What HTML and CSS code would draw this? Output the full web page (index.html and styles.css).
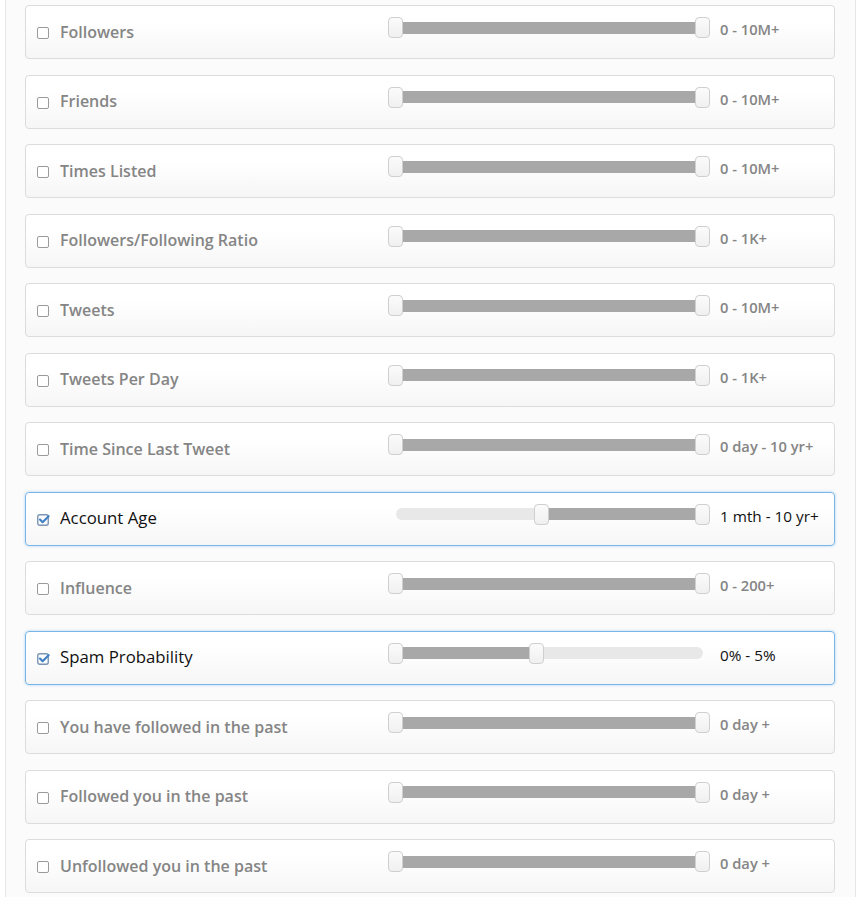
FILE: index.html
```html
<!DOCTYPE html>
<html>
<head>
<meta charset="utf-8">
<link rel="stylesheet" href="styles.css">
</head>
<body>
<div class="panel">
  <div class="card">
    <span class="box"></span><span class="label">Followers</span>
    <div class="slider"><div class="track"><div class="sel" style="left:0%;right:0%"></div><span class="h" style="left:0%"></span><span class="h" style="left:100%"></span></div></div>
    <span class="val">0 - 10M+</span>
  </div>
  <div class="card">
    <span class="box"></span><span class="label">Friends</span>
    <div class="slider"><div class="track"><div class="sel" style="left:0%;right:0%"></div><span class="h" style="left:0%"></span><span class="h" style="left:100%"></span></div></div>
    <span class="val">0 - 10M+</span>
  </div>
  <div class="card">
    <span class="box"></span><span class="label">Times Listed</span>
    <div class="slider"><div class="track"><div class="sel" style="left:0%;right:0%"></div><span class="h" style="left:0%"></span><span class="h" style="left:100%"></span></div></div>
    <span class="val">0 - 10M+</span>
  </div>
  <div class="card">
    <span class="box"></span><span class="label">Followers/Following Ratio</span>
    <div class="slider"><div class="track"><div class="sel" style="left:0%;right:0%"></div><span class="h" style="left:0%"></span><span class="h" style="left:100%"></span></div></div>
    <span class="val">0 - 1K+</span>
  </div>
  <div class="card">
    <span class="box"></span><span class="label">Tweets</span>
    <div class="slider"><div class="track"><div class="sel" style="left:0%;right:0%"></div><span class="h" style="left:0%"></span><span class="h" style="left:100%"></span></div></div>
    <span class="val">0 - 10M+</span>
  </div>
  <div class="card">
    <span class="box"></span><span class="label">Tweets Per Day</span>
    <div class="slider"><div class="track"><div class="sel" style="left:0%;right:0%"></div><span class="h" style="left:0%"></span><span class="h" style="left:100%"></span></div></div>
    <span class="val">0 - 1K+</span>
  </div>
  <div class="card">
    <span class="box"></span><span class="label">Time Since Last Tweet</span>
    <div class="slider"><div class="track"><div class="sel" style="left:0%;right:0%"></div><span class="h" style="left:0%"></span><span class="h" style="left:100%"></span></div></div>
    <span class="val">0 day - 10 yr+</span>
  </div>
  <div class="card on">
    <svg class="chk" viewBox="0 0 13 13" width="13" height="13"><rect x="0.75" y="1.75" width="10.5" height="10.5" rx="2" fill="none" stroke="#7b95b3" stroke-width="1.4"/><path d="M3 6.6 L5.6 9.2 L11.6 3.2" fill="none" stroke="#3f7fc4" stroke-width="2.1" stroke-linecap="round" stroke-linejoin="round"/></svg><span class="label">Account Age</span>
    <div class="slider"><div class="track"><div class="sel" style="left:47.6%;right:0%"></div><span class="h" style="left:47.6%"></span><span class="h" style="left:100%"></span></div></div>
    <span class="val">1 mth - 10 yr+</span>
  </div>
  <div class="card">
    <span class="box"></span><span class="label">Influence</span>
    <div class="slider"><div class="track"><div class="sel" style="left:0%;right:0%"></div><span class="h" style="left:0%"></span><span class="h" style="left:100%"></span></div></div>
    <span class="val">0 - 200+</span>
  </div>
  <div class="card on">
    <svg class="chk" viewBox="0 0 13 13" width="13" height="13"><rect x="0.75" y="1.75" width="10.5" height="10.5" rx="2" fill="none" stroke="#7b95b3" stroke-width="1.4"/><path d="M3 6.6 L5.6 9.2 L11.6 3.2" fill="none" stroke="#3f7fc4" stroke-width="2.1" stroke-linecap="round" stroke-linejoin="round"/></svg><span class="label">Spam Probability</span>
    <div class="slider"><div class="track"><div class="sel" style="left:0%;right:54%"></div><span class="h" style="left:0%"></span><span class="h" style="left:46%"></span></div></div>
    <span class="val">0% - 5%</span>
  </div>
  <div class="card">
    <span class="box"></span><span class="label">You have followed in the past</span>
    <div class="slider"><div class="track"><div class="sel" style="left:0%;right:0%"></div><span class="h" style="left:0%"></span><span class="h" style="left:100%"></span></div></div>
    <span class="val">0 day +</span>
  </div>
  <div class="card">
    <span class="box"></span><span class="label">Followed you in the past</span>
    <div class="slider"><div class="track"><div class="sel" style="left:0%;right:0%"></div><span class="h" style="left:0%"></span><span class="h" style="left:100%"></span></div></div>
    <span class="val">0 day +</span>
  </div>
  <div class="card">
    <span class="box"></span><span class="label">Unfollowed you in the past</span>
    <div class="slider"><div class="track"><div class="sel" style="left:0%;right:0%"></div><span class="h" style="left:0%"></span><span class="h" style="left:100%"></span></div></div>
    <span class="val">0 day +</span>
  </div>
</div>
</body>
</html>
```
FILE: styles.css
```css
html, body {
  margin: 0;
  padding: 0;
  background: #ffffff;
  font-family: "Open Sans", "Liberation Sans", sans-serif;
}
.panel {
  margin: 0 5px;
  width: 851px;
  box-sizing: border-box;
  border-left: 1px solid #e6e6e6;
  border-right: 1px solid #e6e6e6;
  background: #fbfbfb;
  padding: 5px 20px 4px 19px;
  display: flex;
  flex-direction: column;
  gap: 15.5px;
}
.card {
  height: 54px;
  box-sizing: border-box;
  border: 1px solid #dcdcdc;
  border-radius: 4px;
  background: linear-gradient(#ffffff 30%, #f6f6f6);
  display: flex;
  align-items: center;
  padding-left: 11px;
}
.card.on {
  border-color: #79b5e6;
  box-shadow: 0 0 3px rgba(102, 175, 233, 0.55);
}
.box {
  width: 12px;
  height: 12px;
  box-sizing: border-box;
  border: 1px solid #9a9a9a;
  border-radius: 2px;
  background: #fff;
  margin-top: 2px;
  flex: none;
}
.chk {
  flex: none;
  margin-top: 1px;
  margin-right: -1px;
}
.label {
  margin-left: 11px;
  width: 328px;
  flex: none;
  font-size: 16px;
  font-weight: 600;
  color: #858585;
  white-space: nowrap;
  margin-bottom: 1px;
}
.on .label {
  color: #111;
  font-weight: 400;
  font-size: 16.8px;
  margin-bottom: 2px;
}
.slider {
  width: 322px;
  height: 21px;
  flex: none;
  margin-bottom: 9px;
  position: relative;
}
.track {
  position: absolute;
  left: 7.5px;
  right: 7.5px;
  top: 4.5px;
  height: 12px;
  border-radius: 6px;
  background: #e8e8e8;
}
.sel {
  position: absolute;
  top: 0;
  bottom: 0;
  background: #a8a8a8;
}
.h {
  position: absolute;
  top: -4.5px;
  width: 15px;
  height: 21px;
  margin-left: -7.5px;
  box-sizing: border-box;
  border: 1px solid #cfcfcf;
  border-radius: 4px;
  background: linear-gradient(#fbfbfb, #f0f0f0);
}
.val {
  margin-left: 10px;
  margin-bottom: 6px;
  font-size: 14.7px;
  font-weight: 600;
  color: #858585;
  white-space: nowrap;
}
.on .val {
  color: #111;
  font-weight: 400;
  font-size: 15.3px;
}
```
